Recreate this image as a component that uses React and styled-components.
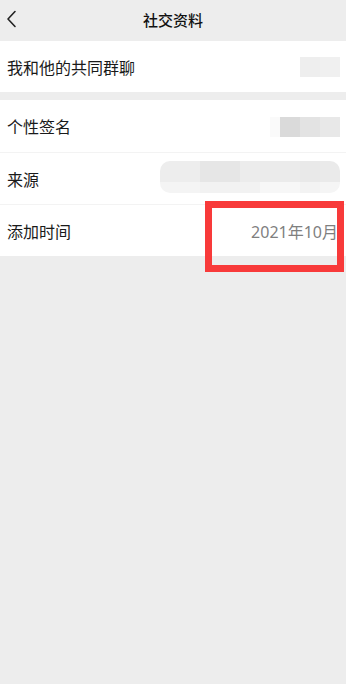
import styled, { createGlobalStyle } from "styled-components"

const GlobalStyle = createGlobalStyle`
  html, body {
    margin: 0;
    padding: 0;
    background: #ededed;
  }
  body {
    font-family: "Noto Sans CJK SC", "Noto Sans", sans-serif;
  }
  * {
    box-sizing: border-box;
  }
`

const Page = styled.div`
  position: relative;
  width: 346px;
  min-height: 684px;
  background: #ededed;
  overflow: hidden;
`

const Header = styled.div`
  height: 40px;
  display: flex;
  align-items: center;
  justify-content: center;
  position: relative;
`

const Back = styled.div`
  position: absolute;
  left: 6px;
  top: 10px;
  width: 12px;
  height: 18px;
  display: flex;
`

const Title = styled.div`
  font-size: 15px;
  font-weight: 500;
  color: #111;
  margin-top: -2px;
`

const Group = styled.div`
  background: #fff;
  margin-top: ${p => p.gap || 0}px;
`

const Row = styled.div`
  height: ${p => p.h || 52}px;
  display: flex;
  align-items: center;
  justify-content: space-between;
  padding: 0 8px 0 7px;
  border-top: ${p => (p.divided ? "1px solid #f3f3f3" : "none")};
`

const Label = styled.div`
  font-size: 16px;
  color: #1a1a1a;
`

const Value = styled.div`
  font-family: "Noto Sans", "Noto Sans CJK SC", sans-serif;
  font-size: 16px;
  color: #7f7f7f;
`

const Blur = styled.div`
  display: flex;
  height: ${p => p.h}px;
  border-radius: ${p => p.r || 0}px;
  overflow: hidden;
  margin-top: ${p => p.mt || 0}px;
  margin-right: -2px;
`

const Cell = styled.div`
  width: ${p => p.w}px;
  display: flex;
  flex-direction: column;
`

const Half = styled.div`
  flex: ${p => p.f || 1};
  background: ${p => p.c};
`

const Highlight = styled.div`
  position: absolute;
  left: 205px;
  top: 201px;
  width: 139px;
  height: 71px;
  border: 7px solid #f83a3a;
`

function App() {
  return (
    <Page>
      <GlobalStyle />
      <Header>
        <Back>
          <svg width="12" height="18" viewBox="0 0 12 18">
            <path d="M9 1.5 L2 9 L9 16.5" fill="none" stroke="#222" strokeWidth="1.6" strokeLinecap="round" strokeLinejoin="round" />
          </svg>
        </Back>
        <Title>社交资料</Title>
      </Header>
      <Group gap={1}>
        <Row h={51}>
          <Label>我和他的共同群聊</Label>
          <Blur h={20}>
            <Cell w={20}><Half c="#eeeeee" /></Cell>
            <Cell w={20}><Half c="#f0f0f0" /></Cell>
          </Blur>
        </Row>
      </Group>
      <Group gap={8}>
        <Row>
          <Label>个性签名</Label>
          <Blur h={20} mt={2}>
            <Cell w={10}><Half c="#fafafa" /></Cell>
            <Cell w={20}><Half c="#dadada" /></Cell>
            <Cell w={20}><Half c="#e3e3e3" /></Cell>
            <Cell w={20}><Half c="#e8e8e8" /></Cell>
          </Blur>
        </Row>
        <Row divided>
          <Label>来源</Label>
          <Blur h={32} r={10} mt={-4}>
            <Cell w={40}><Half c="#ededed" f={2} /><Half c="#f4f4f4" /></Cell>
            <Cell w={40}><Half c="#e6e6e6" f={2} /><Half c="#f2f2f2" /></Cell>
            <Cell w={20}><Half c="#ececec" f={2} /><Half c="#f2f2f2" /></Cell>
            <Cell w={40}><Half c="#ebebeb" f={2} /><Half c="#f7f7f7" /></Cell>
            <Cell w={20}><Half c="#e9e9e9" f={2} /><Half c="#f3f3f3" /></Cell>
            <Cell w={20}><Half c="#eaeaea" f={2} /><Half c="#f5f5f5" /></Cell>
          </Blur>
        </Row>
        <Row divided>
          <Label>添加时间</Label>
          <Value>2021年10月</Value>
        </Row>
      </Group>
      <Highlight />
    </Page>
  )
}

export default App
